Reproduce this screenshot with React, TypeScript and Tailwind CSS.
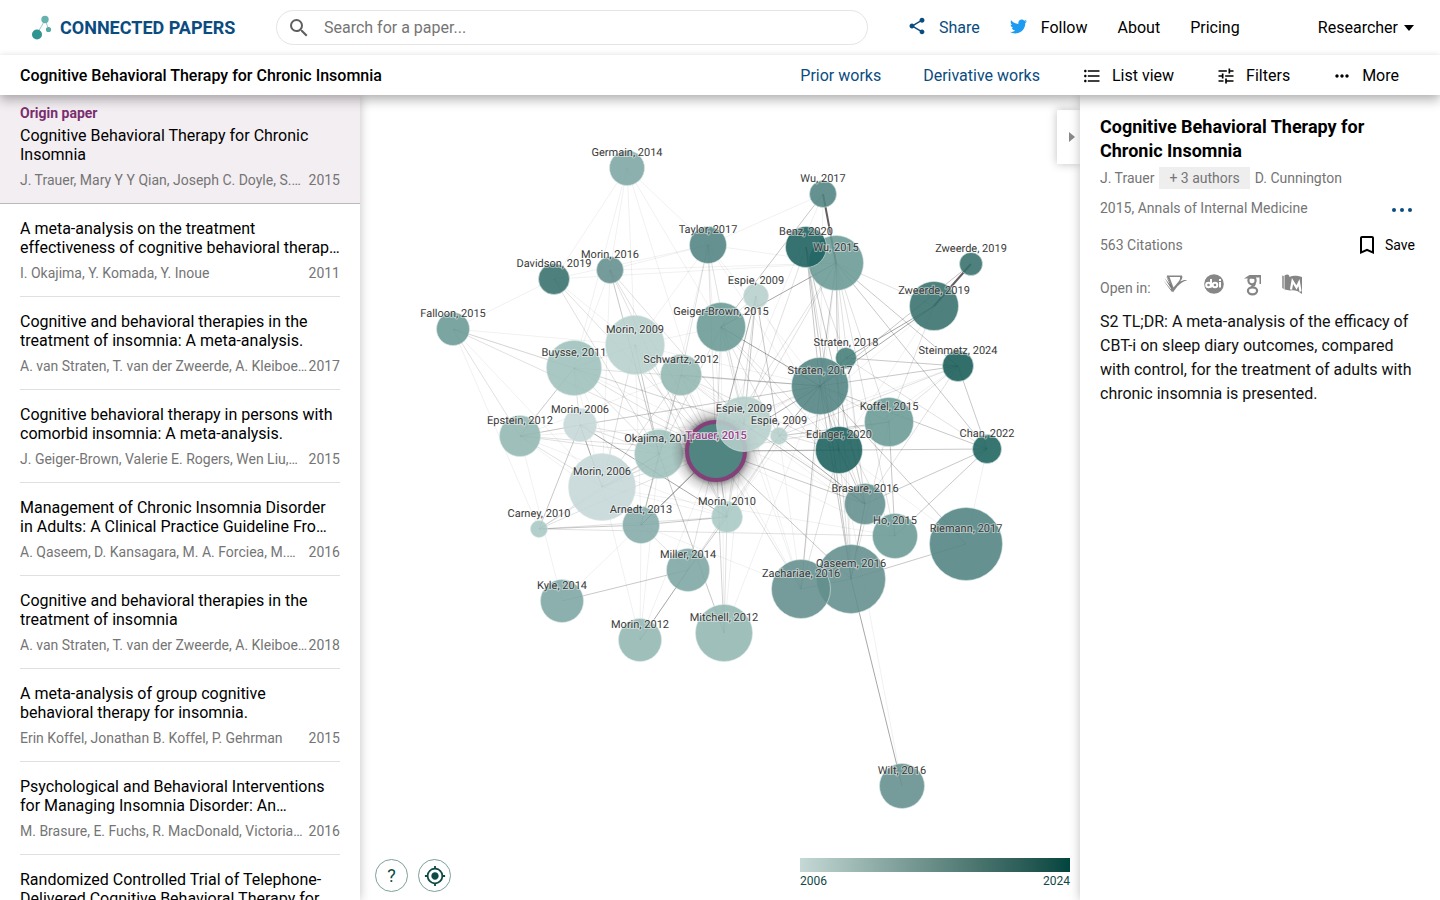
import React from "react";
import {
  MdBookmarkBorder,
  MdFormatListBulleted,
  MdMoreHoriz,
  MdMyLocation,
  MdSearch,
  MdShare,
  MdTune,
} from "react-icons/md";
import { FaTwitter } from "react-icons/fa";

type Paper = { title: string; authors: string; year: number };

const originPaper: Paper = {
  title: "Cognitive Behavioral Therapy for Chronic Insomnia",
  authors: "J. Trauer, Mary Y Y Qian, Joseph C. Doyle, S. Rajaratnam, D. Cunnington",
  year: 2015,
};

const papers: Paper[] = [
  {
    title: "A meta-analysis on the treatment effectiveness of cognitive behavioral therapy for primary insomnia.",
    authors: "I. Okajima, Y. Komada, Y. Inoue",
    year: 2011,
  },
  {
    title: "Cognitive and behavioral therapies in the treatment of insomnia: A meta-analysis.",
    authors: "A. van Straten, T. van der Zweerde, A. Kleiboer, P. Cuijpers, C. Morin",
    year: 2017,
  },
  {
    title: "Cognitive behavioral therapy in persons with comorbid insomnia: A meta-analysis.",
    authors: "J. Geiger-Brown, Valerie E. Rogers, Wen Liu, Emilie M. Ludeman",
    year: 2015,
  },
  {
    title: "Management of Chronic Insomnia Disorder in Adults: A Clinical Practice Guideline From the American College of Physicians",
    authors: "A. Qaseem, D. Kansagara, M. A. Forciea, M. Cooke, T. Denberg",
    year: 2016,
  },
  {
    title: "Cognitive and behavioral therapies in the treatment of insomnia",
    authors: "A. van Straten, T. van der Zweerde, A. Kleiboer, P. Cuijpers, C. Morin",
    year: 2018,
  },
  {
    title: "A meta-analysis of group cognitive behavioral therapy for insomnia.",
    authors: "Erin Koffel, Jonathan B. Koffel, P. Gehrman",
    year: 2015,
  },
  {
    title: "Psychological and Behavioral Interventions for Managing Insomnia Disorder: An Evidence Report for a Clinical Practice Guideline",
    authors: "M. Brasure, E. Fuchs, R. MacDonald, Victoria Nelson",
    year: 2016,
  },
  {
    title: "Randomized Controlled Trial of Telephone-Delivered Cognitive Behavioral Therapy for Chronic Insomnia",
    authors: "J. Arnedt, L. Cuddihy, L. M. Swanson",
    year: 2013,
  },
];

const yearColor: Record<number, string> = {
  2006: "#c5d7d7",
  2009: "#b6cfcc",
  2010: "#a7c8c4",
  2011: "#9dc0bb",
  2012: "#92b6b1",
  2013: "#83aba8",
  2014: "#7ba5a2",
  2015: "#699994",
  2016: "#628e8c",
  2017: "#508381",
  2018: "#437c77",
  2019: "#366f6b",
  2020: "#1a605c",
  2022: "#1b625d",
  2024: "#165b55",
};

type GraphNode = { name: string; year: number; x: number; y: number; r: number };

const nodes: Record<string, GraphNode> = {
  germain: { name: "Germain", year: 2014, x: 627, y: 168, r: 17 },
  wu17: { name: "Wu", year: 2017, x: 823, y: 194, r: 13 },
  taylor: { name: "Taylor", year: 2017, x: 708, y: 245, r: 18 },
  davidson: { name: "Davidson", year: 2019, x: 554, y: 279, r: 15 },
  morin16: { name: "Morin", year: 2016, x: 610, y: 270, r: 13 },
  wu15: { name: "Wu", year: 2015, x: 836, y: 263, r: 27 },
  benz: { name: "Benz", year: 2020, x: 806, y: 247, r: 20 },
  zweerdeS: { name: "Zweerde", year: 2019, x: 971, y: 264, r: 11 },
  zweerde: { name: "Zweerde", year: 2019, x: 934, y: 306, r: 24 },
  espieS: { name: "Espie", year: 2009, x: 756, y: 296, r: 12 },
  geiger: { name: "Geiger-Brown", year: 2015, x: 721, y: 327, r: 24 },
  falloon: { name: "Falloon", year: 2015, x: 453, y: 329, r: 16 },
  morin09: { name: "Morin", year: 2009, x: 635, y: 345, r: 29 },
  buysse: { name: "Buysse", year: 2011, x: 574, y: 368, r: 27 },
  schwartz: { name: "Schwartz", year: 2012, x: 681, y: 375, r: 20 },
  straten18: { name: "Straten", year: 2018, x: 846, y: 358, r: 10 },
  straten17: { name: "Straten", year: 2017, x: 820, y: 386, r: 28 },
  steinmetz: { name: "Steinmetz", year: 2024, x: 958, y: 366, r: 15 },
  koffel: { name: "Koffel", year: 2015, x: 889, y: 422, r: 24 },
  epstein: { name: "Epstein", year: 2012, x: 520, y: 436, r: 20 },
  morin06s: { name: "Morin", year: 2006, x: 580, y: 425, r: 16 },
  edinger: { name: "Edinger", year: 2020, x: 839, y: 450, r: 23 },
  chan: { name: "Chan", year: 2022, x: 987, y: 449, r: 14 },
  morin06: { name: "Morin", year: 2006, x: 602, y: 487, r: 33 },
  okajima: { name: "Okajima", year: 2011, x: 659, y: 454, r: 24 },
  trauer: { name: "Trauer", year: 2015, x: 716, y: 451, r: 29 },
  espie: { name: "Espie", year: 2009, x: 744, y: 424, r: 27 },
  espieXs: { name: "Espie", year: 2009, x: 779, y: 436, r: 8 },
  brasure: { name: "Brasure", year: 2016, x: 865, y: 504, r: 20 },
  ho: { name: "Ho", year: 2015, x: 895, y: 536, r: 22 },
  riemann: { name: "Riemann", year: 2017, x: 966, y: 544, r: 36 },
  carney: { name: "Carney", year: 2010, x: 539, y: 529, r: 8 },
  arnedt: { name: "Arnedt", year: 2013, x: 641, y: 525, r: 18 },
  morin10: { name: "Morin", year: 2010, x: 727, y: 517, r: 15 },
  miller: { name: "Miller", year: 2014, x: 688, y: 570, r: 21 },
  qaseem: { name: "Qaseem", year: 2016, x: 851, y: 579, r: 34 },
  zachariae: { name: "Zachariae", year: 2016, x: 801, y: 589, r: 29 },
  kyle: { name: "Kyle", year: 2014, x: 562, y: 601, r: 21 },
  morin12: { name: "Morin", year: 2012, x: 640, y: 640, r: 21 },
  mitchell: { name: "Mitchell", year: 2012, x: 724, y: 633, r: 28 },
  wilt: { name: "Wilt", year: 2016, x: 902, y: 786, r: 22 },
};

// Similarity links grouped by strength, one line per source node.
const strongest = ["wu17:wu15", "zweerdeS:zweerde"];

const strong = [
  "geiger:wu15 straten17",
  "zweerde:straten17 straten18",
  "morin06s:morin06 morin10",
  "straten18:straten17",
  "straten17:espieXs",
  "espieXs:brasure",
  "qaseem:wilt brasure",
  "miller:morin12",
  "trauer:arnedt",
];

const medium = [
  "wu17:geiger",
  "wu15:straten17 steinmetz chan edinger",
  "benz:qaseem brasure straten17",
  "espieS:espie espieXs trauer",
  "zweerdeS:straten17",
  "steinmetz:straten18 straten17 chan",
  "chan:trauer straten17 brasure ho",
  "koffel:ho espieXs",
  "trauer:qaseem brasure morin10 straten17",
  "zachariae:straten17 qaseem",
  "riemann:qaseem straten17",
  "miller:kyle morin10",
  "mitchell:okajima",
  "epstein:buysse",
  "carney:morin06s arnedt",
  "arnedt:morin10 okajima",
  "morin09:okajima",
  "morin16:okajima",
  "morin06s:straten17",
  "edinger:brasure",
  "straten17:edinger qaseem",
  "schwartz:straten17",
  "espie:brasure",
  "okajima:morin06",
];

const light = [
  "falloon:epstein buysse trauer",
  "davidson:trauer okajima",
  "morin16:trauer espie morin10",
  "taylor:schwartz trauer espie",
  "morin09:trauer morin06 buysse morin10",
  "buysse:trauer okajima morin06s straten17 espie",
  "schwartz:trauer okajima espie morin06 arnedt edinger",
  "espieS:geiger morin10 trauer",
  "geiger:okajima espie edinger espieXs brasure trauer",
  "wu15:trauer espie zweerde brasure koffel ho qaseem",
  "benz:espie straten18 edinger",
  "straten17:trauer okajima ho brasure",
  "koffel:trauer qaseem zweerde steinmetz straten17",
  "edinger:trauer espie zachariae qaseem",
  "steinmetz:espieXs",
  "chan:straten18",
  "epstein:trauer morin06s okajima morin06",
  "morin06s:okajima trauer epstein",
  "morin06:trauer espie carney",
  "carney:trauer okajima morin10 ho",
  "arnedt:trauer espie miller",
  "trauer:zachariae miller mitchell",
  "morin10:mitchell espie espieXs",
  "espieXs:miller",
  "brasure:steinmetz",
];

const faint = [
  "germain:davidson morin16 morin09 taylor geiger trauer buysse",
  "falloon:davidson morin09 morin06 espie carney",
  "davidson:morin09 wu15 taylor",
  "taylor:wu17 wu15 morin16 morin09 edinger straten17 okajima morin10",
  "morin16:buysse wu15 morin06",
  "morin09:geiger arnedt straten17 espieXs",
  "epstein:kyle espie schwartz arnedt morin10",
  "morin06:morin12 ho buysse morin10",
  "arnedt:zachariae morin12 kyle",
  "morin12:okajima trauer",
  "mitchell:geiger straten17 trauer espie",
  "steinmetz:trauer edinger",
  "chan:riemann",
  "wilt:edinger",
  "wu17:straten17 trauer",
  "wu15:zachariae",
  "ho:trauer espie",
  "riemann:edinger",
  "straten18:trauer brasure qaseem",
  "schwartz:brasure zachariae",
  "buysse:brasure arnedt",
  "zachariae:espie geiger espieXs",
  "edinger:espieS okajima",
  "zweerde:edinger espieXs",
  "straten17:morin06 morin10",
];

function Links({ groups, className }: { groups: string[]; className: string }) {
  return (
    <g className={className}>
      {groups.flatMap((group) => {
        const [from, targets] = group.split(":");
        const a = nodes[from];
        return targets.split(" ").map((to) => {
          const b = nodes[to];
          return <line key={from + to} x1={a.x} y1={a.y} x2={b.x} y2={b.y} />;
        });
      })}
    </g>
  );
}

function Graph() {
  return (
    <svg
      className="h-full w-full font-['Roboto',sans-serif] text-[11px] [text-rendering:geometricPrecision]"
      viewBox="360 95 720 805"
      role="img"
      aria-label="Paper similarity graph"
    >
      <defs>
        <radialGradient id="glow">
          <stop offset="0.65" stopColor="#222" stopOpacity="0.6" />
          <stop offset="0.8" stopColor="#444" stopOpacity="0.22" />
          <stop offset="1" stopColor="#666" stopOpacity="0" />
        </radialGradient>
      </defs>
      <Links groups={faint} className="stroke-black [stroke-opacity:0.06]" />
      <Links groups={light} className="stroke-black [stroke-opacity:0.12]" />
      <Links groups={medium} className="stroke-[#222] [stroke-opacity:0.25]" />
      <Links groups={strong} className="stroke-[#222] [stroke-opacity:0.4]" />
      <Links groups={strongest} className="stroke-[#4a3f42] stroke-2 [stroke-opacity:0.85]" />
      {Object.entries(nodes).map(([id, n]) =>
        id === "trauer" ? (
          <g key={id}>
            <circle cx={n.x} cy={n.y} r={45} fill="url(#glow)" />
            <circle cx={n.x} cy={n.y} r={n.r} fill="#518581" stroke="#844179" strokeWidth={4} />
          </g>
        ) : (
          <circle
            key={id}
            cx={n.x}
            cy={n.y}
            r={n.r + 0.5}
            fill={yearColor[n.year]}
            fillOpacity={0.88}
            stroke="#d5e6e3"
            strokeOpacity={0.6}
          />
        )
      )}
      {Object.entries(nodes).map(([id, n]) => (
        <text
          key={id}
          x={n.x}
          y={n.y - 12}
          textAnchor="middle"
          className={
            id === "trauer"
              ? "fill-[#9a3d8c] stroke-white stroke-2 font-medium [paint-order:stroke] [stroke-opacity:0.7]"
              : "fill-[#3a3a3a] stroke-white stroke-2 [paint-order:stroke] [stroke-opacity:0.45]"
          }
        >
          {n.name}, {n.year}
        </text>
      ))}
    </svg>
  );
}

function Logo() {
  return (
    <svg className="h-7 w-5" viewBox="0 0 20 28" aria-hidden="true">
      <path d="M5 20 13 6 17 16" fill="none" stroke="#9ccac7" />
      <circle cx="5" cy="20.5" r="5" fill="#2f9591" />
      <circle cx="13" cy="5.500" r="3.700" fill="#67b2ae" />
      <circle cx="16.500" cy="15.500" r="2.600" fill="#56aaa5" />
    </svg>
  );
}

function SemanticScholarIcon() {
  return (
    <svg className="h-6 w-6" viewBox="0 0 24 24" aria-hidden="true">
      <path d="M0 7 9 17.500 9 19zM1.500 5 9 14 9 17zM3 3l7 11-1 2z" fill="#777" />
      <path d="M4 2.500h15c1 2 0 4-2 6 3-1 5-2 7-1-6 1-10 6-14 12l-2-3 1-3L4 4z" fill="#858585" />
      <path d="M6.500 4H17c1 3-3 6-6.500 10.500z" fill="#fff" />
    </svg>
  );
}

function DoiIcon() {
  return (
    <svg className="h-6 w-6" viewBox="0 0 24 24" aria-hidden="true">
      <circle cx="12" cy="11" r="9.800" fill="#878787" />
      <g fill="none" stroke="#fff" strokeWidth="2">
        <circle cx="6.500" cy="12" r="2.300" />
        <path d="M9 6v8.500" />
        <circle cx="13" cy="12" r="2.300" />
        <path d="M18 9v5.500M18 6v2" />
      </g>
    </svg>
  );
}

function ScholarIcon() {
  return (
    <svg className="h-6 w-6" viewBox="0 0 24 24" aria-hidden="true">
      <path d="M3 5.500 8.500 2H20v9h-1.500V4.500H15L13.500 6 8 5.500z" fill="#858585" />
      <g fill="none" stroke="#858585" strokeWidth="2.200">
        <ellipse cx="11" cy="7.500" rx="3.600" ry="3.800" />
        <path d="M13.500 10.500c1 2-3 1.800-2.500 3.500" />
        <ellipse cx="11.500" cy="17.800" rx="4.600" ry="3.500" />
      </g>
    </svg>
  );
}

function PubMedIcon() {
  return (
    <svg className="h-6 w-6" viewBox="0 0 24 24" aria-hidden="true">
      <path d="M2 2.500 4 3v13l-2-1z" fill="#a5a5a5" />
      <path d="M4.500 2.500C7 1 9 1 9.500 4c4-2 8-1 12.500 0v17c-5-4-8-4-12-3.500l-5.500-1z" fill="#858585" />
      <path d="M11 16.500 12.500 8l4 6.500 2.500-5 1.500 9" fill="none" stroke="#fff" strokeWidth="2.200" />
    </svg>
  );
}

function PaperMeta({ paper }: { paper: Paper }) {
  return (
    <div className="mt-2 flex justify-between text-sm leading-4 text-[#757575]">
      <span className="line-clamp-1 w-72">{paper.authors}</span>
      <span>{paper.year}</span>
    </div>
  );
}

export default function App() {
  return (
    <div className="flex h-screen flex-col overflow-hidden bg-white font-['Roboto',sans-serif] text-base text-black">
      <header className="flex h-[55px] shrink-0 items-center">
        <a href="#home" className="ml-8 flex w-[244px] items-center gap-2 text-lg font-bold text-[#0a4c80]">
          <Logo />
          CONNECTED PAPERS
        </a>
        <label className="flex h-[35px] max-w-[592px] flex-1 items-center rounded-full border border-[#e4e4e4] pl-2.5">
          <MdSearch className="h-6 w-6 text-[#5f5f5f]" />
          <input
            type="search"
            aria-label="Search for a paper"
            placeholder="Search for a paper..."
            className="ml-[13px] flex-1 bg-transparent pr-4 outline-none placeholder:text-[#757575]"
          />
        </label>
        <nav className="ml-[39px] flex items-center gap-[30px]">
          <a href="#share" className="flex items-center gap-3 text-[#0a4c80]">
            <MdShare className="mb-1 h-5 w-5" />
            Share
          </a>
          <a href="#follow" className="flex items-center gap-3.5">
            <FaTwitter className="mb-0.5 h-[17px] w-[17px] text-[#1d9bf0]" />
            Follow
          </a>
          <a href="#about">About</a>
          <a href="#pricing">Pricing</a>
        </nav>
        <button className="mr-[26px] ml-auto flex items-center gap-1.5">
          Researcher
          <svg className="h-1.5 w-2.5" viewBox="0 0 10 6" aria-hidden="true">
            <path d="M0 0h10L5 6z" />
          </svg>
        </button>
      </header>

      <div className="z-20 flex h-10 shrink-0 items-center bg-white pt-0.5 pr-[41px] pl-5 shadow-[0_0_6px_rgba(0,0,0,0.08),0_6px_10px_rgba(0,0,0,0.25)]">
        <h1 className="flex-1 font-medium">Cognitive Behavioral Therapy for Chronic Insomnia</h1>
        <div className="flex items-center gap-[42px]">
          <button className="text-[#0a4c80]">Prior works</button>
          <button className="text-[#0a4c80]">Derivative works</button>
          <button className="flex items-center gap-2.5">
            <MdFormatListBulleted className="h-5 w-5" />
            List view
          </button>
          <button className="flex items-center gap-2.5">
            <MdTune className="h-5 w-5" />
            Filters
          </button>
          <button className="flex items-center gap-2.5">
            <MdMoreHoriz className="h-5 w-5" />
            More
          </button>
        </div>
      </div>

      <div className="flex min-h-0 flex-1">
        <aside className="z-10 w-[360px] shrink-0 overflow-hidden bg-white shadow-[0_0_10px_rgba(0,0,0,0.25)]">
          <article className="border-b border-[#bdb6bb] bg-[#f3eef2] px-5 pt-2.5 pb-[15px]">
            <p className="text-sm leading-4 font-bold text-[#7b2e6f]">Origin paper</p>
            <h2 className="mt-[5px] leading-[19px]">{originPaper.title}</h2>
            <PaperMeta paper={originPaper} />
          </article>
          {papers.map((paper) => (
            <article key={paper.title} className="mx-5 border-b border-[#e0e0e0] py-[15px]">
              <h2 className="line-clamp-2 leading-[19px]">{paper.title}</h2>
              <PaperMeta paper={paper} />
            </article>
          ))}
        </aside>

        <main className="relative min-w-0 flex-1">
          <Graph />
          <button
            aria-label="Collapse details"
            className="absolute top-[15px] right-0 flex h-[54px] w-[23px] items-center justify-center bg-white pl-1.5 shadow-[0_0_10px_rgba(0,0,0,0.25)]"
          >
            <svg className="h-2.5 w-1.5" viewBox="0 0 6 10" fill="#8a8a8a" aria-hidden="true">
              <path d="M0 0 6 5 0 10z" />
            </svg>
          </button>
          <div className="absolute bottom-2 left-[15px] flex gap-2.5">
            <button className="flex h-[33px] w-[33px] items-center justify-center rounded-full border border-[#7da09d] bg-white text-lg text-[#0d4a47]">
              ?
            </button>
            <button
              aria-label="Center graph"
              className="flex h-[33px] w-[33px] items-center justify-center rounded-full border border-[#7da09d] bg-white text-[#0d4a47]"
            >
              <MdMyLocation className="h-[22px] w-[22px]" />
            </button>
          </div>
          <div className="absolute right-2.5 bottom-[11px] w-[270px] text-xs leading-4 text-[#0d4a47]">
            <div className="h-3.5 bg-linear-to-r from-[#c5d9d5] to-[#00453f]" />
            <div className="mt-px flex justify-between">
              <span>2006</span>
              <span>2024</span>
            </div>
          </div>
        </main>

        <aside className="z-10 w-[360px] shrink-0 bg-white pt-5 pr-[25px] pl-5 text-sm text-[#757575] shadow-[0_0_10px_rgba(0,0,0,0.25)]">
          <h2 className="text-lg leading-6 font-bold text-black">Cognitive Behavioral Therapy for Chronic Insomnia</h2>
          <div className="mt-1 flex items-center gap-[5px] leading-[22px]">
            <span>J. Trauer</span>
            <button className="bg-[#eeeeee] px-2.5">+ 3 authors</button>
            <span>D. Cunnington</span>
          </div>
          <div className="mt-2 flex items-center justify-between leading-[22px]">
            <span>2015, Annals of Internal Medicine</span>
            <button aria-label="More details" className="pt-1 text-[#0a4c80]">
              <svg className="h-1.5 w-6" viewBox="0 0 24 6" fill="currentColor" aria-hidden="true">
                <circle cx="3" cy="3" r="2" />
                <circle cx="11" cy="3" r="2" />
                <circle cx="19" cy="3" r="2" />
              </svg>
            </button>
          </div>
          <div className="mt-3.5 flex items-center justify-between">
            <span>563 Citations</span>
            <button className="flex items-center gap-1.5 text-black">
              <MdBookmarkBorder className="h-6 w-6" />
              Save
            </button>
          </div>
          <div className="mt-4 flex h-6 items-center">
            <span className="mr-3 pt-1.5">Open in:</span>
            <div className="flex gap-[15px]">
              <a href="#semantic-scholar" aria-label="Semantic Scholar"><SemanticScholarIcon /></a>
              <a href="#doi" aria-label="DOI"><DoiIcon /></a>
              <a href="#google-scholar" aria-label="Google Scholar"><ScholarIcon /></a>
              <a href="#pubmed" aria-label="PubMed"><PubMedIcon /></a>
            </div>
          </div>
          <p className="mt-[13px] text-base leading-6 text-[#111]">
            S2 TL;DR: A meta-analysis of the efficacy of CBT-i on sleep diary outcomes, compared with control, for the
            treatment of adults with chronic insomnia is presented.
          </p>
        </aside>
      </div>
    </div>
  );
}
